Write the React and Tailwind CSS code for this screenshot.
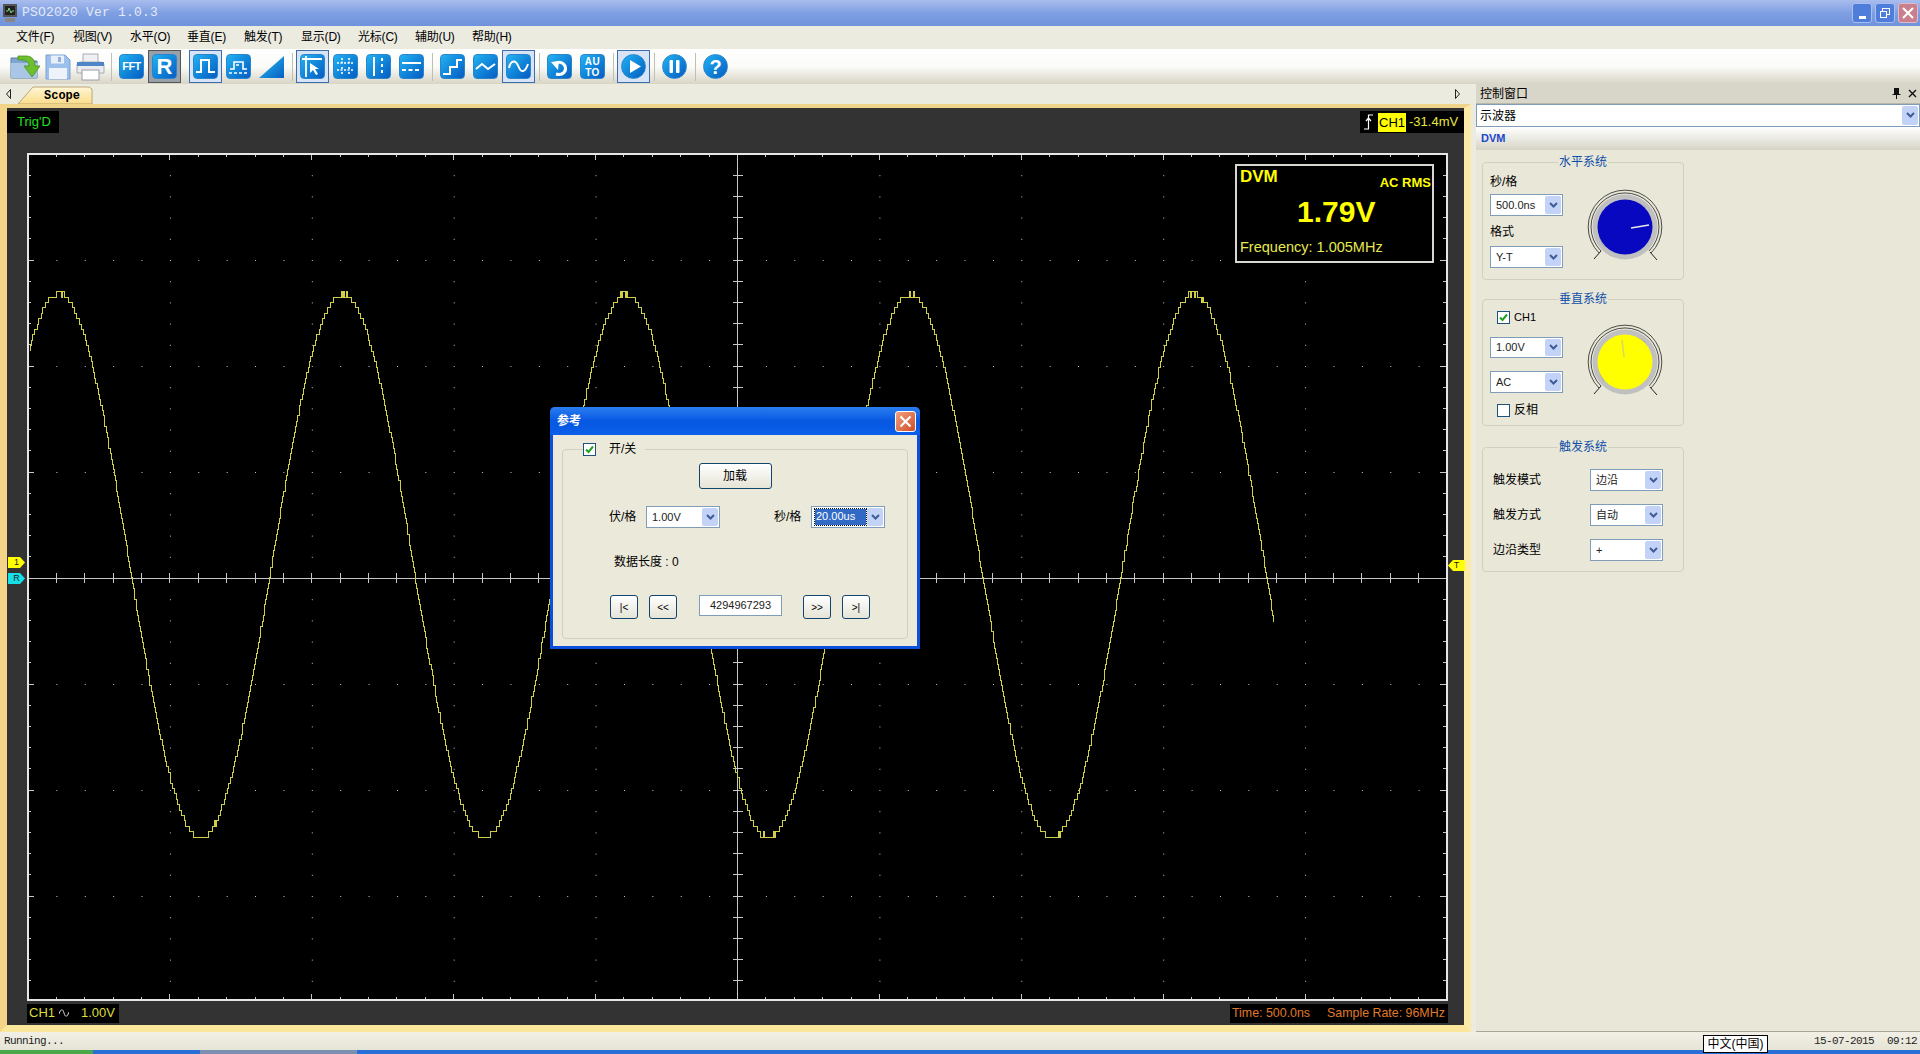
import React from "react";

const MENUS = ["文件(F)", "视图(V)", "水平(O)", "垂直(E)", "触发(T)", "显示(D)", "光标(C)", "辅助(U)", "帮助(H)"];

const X0 = 28;
const Y0 = 154;
const DX = 141.9;
const DY = 106;
const CX = X0 + DX * 5;
const CY = Y0 + DY * 4;

function wavePath() {
  const q = 5.4;
  let d = "";
  let last = null;
  for (let x = 30; x <= 1274; x += 1) {
    const y = 565.5 - 271.5 * Math.cos((2 * Math.PI * (x - 59)) / 283.75);
    const r = Math.sin(x * 12.9898) * 43758.5453;
    const noise = (r - Math.floor(r) - 0.5) * q * 0.7;
    const level = Math.round((y + noise) / q) * q;
    if (last === null) d += `M${x} ${level}`;
    else d += `V${level}H${x}`;
    last = level;
  }
  return d;
}

function Grid() {
  const lines = [];
  for (let i = 0; i <= 50; i++) {
    const x = X0 + (DX * i) / 5;
    const major = i % 5 === 0;
    const len = major ? 6 : 3;
    lines.push(`M${x} ${Y0}v${len}M${x} 1000v-${len}`);
    lines.push(`M${x} ${CY - 5}v10`);
  }
  for (let j = 0; j <= 40; j++) {
    const y = Y0 + (DY * j) / 5;
    const major = j % 5 === 0;
    const len = major ? 6 : 3;
    lines.push(`M${X0} ${y}h${len}M1446 ${y}h-${len}`);
    lines.push(`M${CX - 5} ${y}h10`);
  }
  const dots = [];
  for (let r = 1; r < 8; r++) {
    if (r === 4) continue;
    for (let i = 1; i < 50; i++) {
      dots.push(<rect key={`h${r}-${i}`} x={X0 + (DX * i) / 5} y={Y0 + DY * r} width="1" height="1" fill="#c8c8c8" />);
    }
  }
  for (let c = 1; c < 10; c++) {
    if (c === 5) continue;
    for (let j = 1; j < 40; j++) {
      if (j % 5 === 0) continue;
      dots.push(<rect key={`v${c}-${j}`} x={X0 + DX * c} y={Y0 + (DY * j) / 5} width="1" height="1" fill="#c8c8c8" />);
    }
  }
  return (
    <svg width="1417" height="844" viewBox="29 155 1417 844" className="block">
      {dots}
      <path d={lines.join("")} stroke="#c8c8c8" strokeWidth="1" fill="none" shapeRendering="crispEdges" />
      <path d={`M${X0} ${CY}H1446M${CX} ${Y0}V1000`} stroke="#c8c8c8" strokeWidth="1" shapeRendering="crispEdges" />
      <path d={wavePath()} stroke="#d0d048" strokeWidth="1" fill="none" shapeRendering="crispEdges" />
    </svg>
  );
}

function Tile({ round, children }) {
  return (
    <div
      className={`w-[25px] h-[25px] flex items-center justify-center bg-gradient-to-br from-[#25b2f2] to-[#0a5cc2] border border-[#2a86cc] ${
        round ? "rounded-full" : "rounded-[4px]"
      }`}
    >
      {children}
    </div>
  );
}

function Glyph({ children }) {
  return (
    <svg width="23" height="23" viewBox="0 0 23 23" fill="none" stroke="#fff" strokeWidth="2">
      {children}
    </svg>
  );
}

function Slot({ active, gray, children }) {
  let cls = "";
  if (active) cls = "border border-[#3b6eaa] bg-[#d8e4f6]";
  if (gray) cls = "border border-[#555] bg-[#9aa0aa]";
  return <div className={`w-[33px] h-[33px] flex items-center justify-center ${cls}`}>{children}</div>;
}

function Sep({ hidden }) {
  return (
    <div className="w-[8px] h-[28px] flex justify-center">
      {!hidden && <div className="w-px h-full bg-[#c0bfb4]" />}
    </div>
  );
}

function Toolbar() {
  return (
    <div className="h-[35px] flex items-center px-[8px] bg-gradient-to-b from-white via-[#fbfbf8] to-[#d8d5c6]">
      <Slot>
        <svg width="32" height="30" viewBox="0 0 32 30">
          <path d="M2 6h10l2 3h14v17H2z" fill="#7fa6d0" stroke="#5a7da6" />
          <path d="M2 11h26v15H2z" fill="#a9c6e6" />
          <path d="M9 4h8c6 0 9 4 9 10h5l-8 11-8-11h5c0-4-3-6-6-6H9z" fill="#6cc02e" stroke="#4b8f1c" strokeWidth="0.8" />
        </svg>
      </Slot>
      <Slot>
        <svg width="26" height="26" viewBox="0 0 26 26">
          <path d="M1 1h19l5 5v19H1z" fill="#9cc0ec" stroke="#7ba0d2" />
          <rect x="6" y="1.5" width="13" height="8" fill="#e8eff9" />
          <rect x="13" y="3" width="3" height="5" fill="#8fb0dc" />
          <rect x="4" y="14" width="18" height="11" fill="#eef3fb" />
        </svg>
      </Slot>
      <Slot>
        <svg width="31" height="28" viewBox="0 0 31 28">
          <rect x="8" y="1" width="15" height="9" fill="#eef0f3" stroke="#a8acb4" />
          <path d="M2 12c0-2 2-3 4-3h19c2 0 4 1 4 3v8H2z" fill="#e9ebee" stroke="#a8acb4" />
          <rect x="2" y="9" width="27" height="4" fill="#4c86c6" />
          <rect x="7" y="17" width="17" height="10" fill="#fff" stroke="#9a9ea6" />
        </svg>
      </Slot>
      <Sep />
      <Slot>
        <Tile>
          <span className="text-white font-bold text-[11px] tracking-[-0.5px]">FFT</span>
        </Tile>
      </Slot>
      <Slot gray>
        <Tile>
          <span className="text-white font-bold text-[22px] leading-none">R</span>
        </Tile>
      </Slot>
      <Sep hidden />
      <Slot active>
        <Tile>
          <Glyph>
            <path d="M2 17h5V5h8v12h6" />
          </Glyph>
        </Tile>
      </Slot>
      <Slot>
        <Tile>
          <Glyph>
            <path d="M3 14h4V7h9v7h4" strokeWidth="1.6" />
            <path d="M2 18h19M9 10h5" strokeWidth="1.6" strokeDasharray="3 2" />
          </Glyph>
        </Tile>
      </Slot>
      <Slot>
        <svg width="25" height="25" viewBox="0 0 25 25">
          <defs>
            <linearGradient id="tri" x1="0" y1="0" x2="1" y2="1">
              <stop offset="0" stopColor="#25c4f4" />
              <stop offset="1" stopColor="#0a5cc2" />
            </linearGradient>
          </defs>
          <path d="M0 24L25 2v22z" fill="url(#tri)" />
        </svg>
      </Slot>
      <Sep />
      <Slot active>
        <Tile>
          <Glyph>
            <path d="M1 4h20M5 1v21" strokeWidth="1.8" />
            <path d="M9 8v10l3-3 3 5 2-1-3-5h4z" fill="#fff" stroke="none" />
          </Glyph>
        </Tile>
      </Slot>
      <Slot>
        <Tile>
          <Glyph>
            <path d="M8 3v6M8 12v2M8 17v3M15 3v6M15 12v2M15 17v3M3 8h17M3 15h17" strokeWidth="1.6" strokeDasharray="2 1.5" />
          </Glyph>
        </Tile>
      </Slot>
      <Slot>
        <Tile>
          <Glyph>
            <path d="M7 2v19" strokeWidth="2" />
            <path d="M15 3v17" strokeWidth="2" strokeDasharray="3 3" />
          </Glyph>
        </Tile>
      </Slot>
      <Slot>
        <Tile>
          <Glyph>
            <path d="M2 8h19" strokeWidth="2" />
            <path d="M2 15h19" strokeWidth="2" strokeDasharray="4 2.5" />
          </Glyph>
        </Tile>
      </Slot>
      <Sep />
      <Slot>
        <Tile>
          <Glyph>
            <path d="M2 19h7v-7h7V5h5" />
          </Glyph>
        </Tile>
      </Slot>
      <Slot>
        <Tile>
          <Glyph>
            <path d="M2 14l6-5 6 5 7-5" />
          </Glyph>
        </Tile>
      </Slot>
      <Slot active>
        <Tile>
          <Glyph>
            <path d="M2 13C4 4 9 5 11.5 11.5S18 18 21 9" />
          </Glyph>
        </Tile>
      </Slot>
      <Sep />
      <Slot>
        <Tile>
          <Glyph>
            <path d="M8 19c7 2 11-3 9-8-2-4-7-5-10-2" strokeWidth="3" />
            <path d="M3 7l7 8 1-9z" fill="#fff" stroke="none" />
          </Glyph>
        </Tile>
      </Slot>
      <Slot>
        <Tile>
          <span className="text-white font-bold text-[10px] leading-[11px] text-center tracking-[0.5px]">
            AU
            <br />
            TO
          </span>
        </Tile>
      </Slot>
      <Sep />
      <Slot active>
        <Tile round>
          <svg width="23" height="23" viewBox="0 0 23 23">
            <path d="M8 5l11 6.5L8 18z" fill="#fff" />
          </svg>
        </Tile>
      </Slot>
      <Sep />
      <Slot>
        <Tile round>
          <svg width="23" height="23" viewBox="0 0 23 23">
            <rect x="6.5" y="5" width="3.5" height="13" rx="1" fill="#fff" />
            <rect x="13" y="5" width="3.5" height="13" rx="1" fill="#fff" />
          </svg>
        </Tile>
      </Slot>
      <Sep />
      <Slot>
        <Tile round>
          <span className="text-white font-bold text-[20px] leading-none">?</span>
        </Tile>
      </Slot>
    </div>
  );
}

function TitleBar() {
  return (
    <div className="h-[26px] flex items-center bg-gradient-to-b from-[#a9bdee] via-[#7f9fe2] to-[#6f92dc] pl-[3px] pr-[2px]">
      <svg width="15" height="18" viewBox="0 0 15 18">
        <rect x="0" y="0" width="14" height="13" fill="#555" />
        <rect x="2" y="2" width="10" height="9" fill="#222" />
        <path d="M3 7h2l1-3 2 5 1-2h2" stroke="#7fd07f" fill="none" />
        <rect x="2" y="14" width="10" height="4" fill="#888" />
      </svg>
      <span className="ml-[4px] text-[13px] tracking-[0.2px] text-[#e4e9f8] font-['Liberation_Mono',monospace]">PSO2020 Ver 1.0.3</span>
      <div className="ml-auto flex gap-[3px] items-center">
        <div className="w-[20px] h-[20px] rounded-[3px] bg-[#4f7ddb] border border-[#a8c0f0] flex items-end justify-center pb-[3px]">
          <div className="w-[7px] h-[3px] bg-white" />
        </div>
        <div className="w-[20px] h-[20px] rounded-[3px] bg-[#4f7ddb] border border-[#a8c0f0] flex items-center justify-center">
          <svg width="12" height="12" viewBox="0 0 12 12" fill="none" stroke="#fff">
            <rect x="3.5" y="1.5" width="7" height="6" />
            <rect x="1.5" y="4.5" width="6" height="6" fill="#4f7ddb" />
          </svg>
        </div>
        <div className="w-[20px] h-[20px] rounded-[3px] bg-[#c8808f] border border-[#e4b8c4] flex items-center justify-center">
          <svg width="12" height="12" viewBox="0 0 12 12" stroke="#fff" strokeWidth="2">
            <path d="M1 1l10 10M11 1L1 11" />
          </svg>
        </div>
      </div>
    </div>
  );
}

function MenuBar() {
  return (
    <div className="h-[23px] flex items-center pl-[16px] pb-[1px] bg-[#ecebe0] text-[12px] text-black">
      {MENUS.map((m) => (
        <div key={m} className="w-[57px] tracking-[-0.2px]">
          {m}
        </div>
      ))}
    </div>
  );
}

function Select({ value, width = "w-[73px]", height = "h-[22px]", selected }) {
  return (
    <div className={`${width} ${height} flex items-center bg-white border border-[#7f9db9] p-[1px]`}>
      <div className="flex-1 min-w-0 flex items-center h-full pl-[2px]">
        {selected ? (
          <span className="bg-[#316ac5] text-white text-[11px] w-[51px] h-[16px] leading-[15px] pl-[1px] outline-1 outline-dotted outline-[#111]">
            {value}
          </span>
        ) : (
          <span className="text-[11px] text-[#222] pl-[2px] whitespace-nowrap">{value}</span>
        )}
      </div>
      <ArrowButton />
    </div>
  );
}

function ArrowButton() {
  return (
    <div className="w-[16px] h-full shrink-0 rounded-[2px] bg-[#c3d3f8] flex items-center justify-center">
      <svg width="9" height="7" viewBox="0 0 9 7" fill="none" stroke="#3f5d94" strokeWidth="2">
        <path d="M1 1l3.5 3.5L8 1" />
      </svg>
    </div>
  );
}

function Check({ checked }) {
  return (
    <div className="w-[13px] h-[13px] shrink-0 bg-white border border-[#1c5180] flex items-center justify-center">
      {checked && (
        <svg width="9" height="9" viewBox="0 0 9 9" fill="none" stroke="#21a121" strokeWidth="2">
          <path d="M1 4.5l2.5 2.5L8 1.5" />
        </svg>
      )}
    </div>
  );
}

function Knob({ color, pointer }) {
  return (
    <svg width="84" height="84" viewBox="-42 -42 84 84">
      <path d="M-26 26A36.8 36.8 0 1 1 26 26" fill="none" stroke="#222" strokeWidth="0.8" />
      <path d="M-24 24A34 34 0 1 1 24 24" fill="none" stroke="#222" strokeWidth="0.8" />
      <circle r="32.5" fill="#c0c0c0" />
      <path d="M-21 19.5A29 29 0 0 1 21 -19.5" fill="none" stroke="#aaa" strokeWidth="1" />
      <circle r="27.5" fill={color} />
      <path d="M-24 24l-7 8M25 25l7 8" stroke="#222" strokeWidth="1" />
      {pointer}
    </svg>
  );
}

function Group({ title, className, children }) {
  return (
    <fieldset className={`w-[202px] ml-[6px] border border-[#d0cfc0] rounded-[4px] text-[12px] ${className}`}>
      <legend className="mx-auto px-[1px] h-[16px] leading-[16px] text-[12px] text-[#0f4fa8]">{title}</legend>
      {children}
    </fieldset>
  );
}

function ControlPanel() {
  return (
    <div className="w-[444px] flex flex-col bg-[#e9e7d8] border-b border-[#a8a79c]">
      <div className="h-[20px] flex items-center bg-[#d8d6c8] pl-[4px] pr-[3px] text-[12px] text-black border-b border-[#b8b7aa]">
        <span>控制窗口</span>
        <svg className="ml-auto" width="9" height="11" viewBox="0 0 9 11" fill="#111">
          <path d="M2 0h5v6h1.5v1H5v4H4V7H.5V6H2z" />
        </svg>
        <svg className="ml-[7px]" width="9" height="9" viewBox="0 0 9 9" stroke="#111" strokeWidth="1.4">
          <path d="M1 1l7 7M8 1L1 8" />
        </svg>
      </div>
      <div className="h-[23px] flex items-center bg-white border border-[#7f9db9] p-[1px] pl-[3px] text-[12px] text-black">
        <span className="flex-1">示波器</span>
        <ArrowButton />
      </div>
      <div className="h-[23px] flex items-center pl-[5px] bg-gradient-to-b from-white to-[#d6d4c6] text-[11px] font-bold text-[#1a46c8]">
        DVM
      </div>

      <Group title="水平系统" className="mt-[4px] h-[126px]">
        <div className="flex pl-[7px]">
          <div className="w-[73px] pt-[4px]">
            <div className="h-[16px] leading-[16px]">秒/格</div>
            <div className="mt-[4px]">
              <Select value="500.0ns" />
            </div>
            <div className="mt-[8px] h-[16px] leading-[16px]">格式</div>
            <div className="mt-[6px]">
              <Select value="Y-T" />
            </div>
          </div>
          <div className="ml-[20px] mt-[15px]">
            <Knob color="#0808c0" pointer={<path d="M6 1L24 -2" stroke="#e8e8e8" strokeWidth="1.6" />} />
          </div>
        </div>
      </Group>

      <Group title="垂直系统" className="mt-[11px] h-[135px]">
        <div className="flex pl-[7px]">
          <div className="w-[73px] pt-[2px]">
            <div className="h-[16px] flex items-center gap-[4px] ml-[7px]">
              <Check checked />
              <span className="text-[11px]">CH1</span>
            </div>
            <div className="mt-[12px]">
              <Select value="1.00V" height="h-[21px]" />
            </div>
            <div className="mt-[13px]">
              <Select value="AC" />
            </div>
            <div className="mt-[9px] h-[16px] flex items-center gap-[4px] ml-[7px]">
              <Check />
              <span>反相</span>
            </div>
          </div>
          <div className="ml-[20px] mt-[13px]">
            <Knob color="#ffff00" pointer={<path d="M-1 -5L-3 -22" stroke="#d8d860" strokeWidth="1.6" />} />
          </div>
        </div>
      </Group>

      <Group title="触发系统" className="mt-[13px] h-[133px]">
        <div className="flex flex-col pl-[10px] pt-[14px] gap-[13px]">
          {[
            ["触发模式", "边沿"],
            ["触发方式", "自动"],
            ["边沿类型", "+"],
          ].map(([label, value]) => (
            <div key={label} className="flex items-center">
              <div className="w-[97px]">{label}</div>
              <Select value={value} />
            </div>
          ))}
        </div>
      </Group>
    </div>
  );
}

function ScopeTab() {
  return (
    <div className="h-[20px] flex items-end pl-[6px] bg-[#ecebe0] relative">
      <svg className="mb-[5px]" width="5" height="10" viewBox="0 0 5 10" fill="none" stroke="#222">
        <path d="M4.5 .5L.5 5l4 4.5z" />
      </svg>
      <div className="relative w-[76px] h-[18px] ml-[7px]">
        <svg className="absolute inset-0" width="76" height="18" viewBox="0 0 76 18">
          <defs>
            <linearGradient id="tabfill" x1="0" y1="0" x2="0" y2="1">
              <stop offset="0" stopColor="#fff6d4" />
              <stop offset="1" stopColor="#fbdc8a" />
            </linearGradient>
          </defs>
          <path d="M0 18L15 1h56l3 2v15z" fill="url(#tabfill)" stroke="#b8a878" />
        </svg>
        <span className="absolute left-[26px] top-[1px] text-[12px] font-bold text-black font-['Liberation_Mono',monospace]">Scope</span>
      </div>
      <svg className="ml-auto mr-[16px] mb-[5px]" width="5" height="10" viewBox="0 0 5 10" fill="none" stroke="#222">
        <path d="M.5 .5L4.5 5l-4 4.5z" />
      </svg>
    </div>
  );
}

function Marker({ className, flip, children }) {
  return (
    <div
      className={`absolute w-[17px] h-[11px] flex items-center justify-center text-[9px] leading-none text-[#222] ${className} ${
        flip ? "[clip-path:polygon(5px_0,100%_0,100%_100%,5px_100%,0_50%)]" : "[clip-path:polygon(0_0,12px_0,100%_50%,12px_100%,0_100%)]"
      }`}
    >
      {children}
    </div>
  );
}

function ScopeArea() {
  return (
    <div className="w-[1476px] flex flex-col">
      <ScopeTab />
      <div className="relative h-[928px] border-t-[4px] border-x-[7px] border-b-[7px] border-t-[#f0d48a] border-l-[#f3d488] border-r-[#fbeaa8] border-b-[#fbe79c] bg-[#333] mr-[5px]">
        <div className="h-[45px] flex items-start justify-between pt-[3px]">
          <div className="w-[52px] h-[22px] bg-black text-[#22e022] text-[13px] leading-[22px] pl-[10px]">Trig'D</div>
          <div className="w-[104px] h-[22px] bg-black flex items-center text-[13px] text-[#e8e840]">
            <svg className="ml-[4px]" width="9" height="16" viewBox="0 0 9 16" fill="none" stroke="#fff" strokeWidth="1.2">
              <path d="M0 15h4.5V1H9M2 7l2.5-3L7 7" />
            </svg>
            <span className="ml-[5px] bg-[#ffff00] text-black px-[1px] leading-[19px] whitespace-nowrap">CH1</span>
            <span className="ml-[3px] whitespace-nowrap">-31.4mV</span>
          </div>
        </div>
        <div className="relative ml-[20px] w-[1421px] h-[848px] border-2 border-[#e6e6e6] bg-black">
          <Grid />
          <div className="absolute left-[1206px] top-[9px] w-[199px] h-[99px] border-2 border-[#d8d8d0] bg-black text-[#ffff00]">
            <div className="absolute left-[3px] top-[-2px] text-[17px] font-bold">DVM</div>
            <div className="absolute right-[1px] top-[7px] text-[13px] font-bold">AC RMS</div>
            <div className="absolute left-[60px] top-[23px] text-[30px] font-bold">1.79V</div>
            <div className="absolute left-[3px] top-[71px] text-[14.5px] text-[#e8e850] whitespace-nowrap">Frequency: 1.005MHz</div>
          </div>
        </div>
        <div className="h-[24px] ml-[20px] w-[1421px] flex items-center justify-between text-[12px]">
          <div className="w-[92px] h-[19px] bg-black text-[#dede3c] flex items-center">
            <span className="ml-[2px] text-[13px]">CH1</span>
            <svg className="ml-[4px]" width="10" height="8" viewBox="0 0 10 8" fill="none" stroke="#ddd">
              <path d="M0 5C2 -1 4 0 5 4s3 5 5 -1" />
            </svg>
            <span className="ml-[12px] text-[13px]">1.00V</span>
          </div>
          <div className="w-[218px] h-[19px] bg-black text-[#e07a28] flex items-center text-[12.4px]">
            <span className="ml-[2px] whitespace-nowrap">Time: 500.0ns</span>
            <span className="ml-[17px] whitespace-nowrap">Sample Rate: 96MHz</span>
          </div>
        </div>
        <Marker className="left-[1px] top-[449px] bg-[#ffff00]">1</Marker>
        <Marker className="left-[1px] top-[465px] bg-[#15e0e8]">R</Marker>
        <Marker flip className="left-[1441px] top-[452px] bg-[#ffff00]">T</Marker>
      </div>
    </div>
  );
}

function DialogButton({ children, className }) {
  return (
    <div className={`flex items-center justify-center rounded-[3px] border border-[#12456e] bg-gradient-to-b from-white to-[#e6e4d6] text-black ${className}`}>
      {children}
    </div>
  );
}

function RefDialog() {
  return (
    <div className="absolute left-[550px] top-[407px] w-[370px] h-[242px] flex flex-col rounded-t-[5px] bg-[#0a50dc] text-[12px] text-black">
      <div className="h-[28px] shrink-0 flex items-center pl-[7px] pr-[4px] rounded-t-[5px] bg-gradient-to-b from-[#2a7cf0] via-[#0758e2] to-[#0a5fe8]">
        <span className="text-white text-[12px] font-bold">参考</span>
        <div className="ml-auto w-[21px] h-[21px] rounded-[3px] border border-white bg-gradient-to-br from-[#f0a080] to-[#d04a24] flex items-center justify-center">
          <svg width="13" height="13" viewBox="0 0 13 13" stroke="#fff" strokeWidth="2.2">
            <path d="M1.5 1.5l10 10M11.5 1.5l-10 10" />
          </svg>
        </div>
      </div>
      <div className="flex-1 mx-[3px] mb-[3px] bg-[#ebe9da] px-[9px] pt-[6px]">
        <fieldset className="border border-[#d0cfc0] rounded-[4px] pb-[19px]">
          <legend className="ml-[20px] h-[16px] flex items-center pr-[9px]">
            <Check checked />
            <span className="ml-[13px]">开/关</span>
          </legend>
          <div className="flex justify-center mt-[6px]">
            <DialogButton className="w-[73px] h-[26px]">加载</DialogButton>
          </div>
          <div className="flex items-center mt-[17px] pl-[46px]">
            <div className="w-[37px]">伏/格</div>
            <Select value="1.00V" width="w-[74px]" />
            <div className="ml-[54px] w-[37px]">秒/格</div>
            <Select value="20.00us" width="w-[74px]" selected />
          </div>
          <div className="mt-[26px] pl-[51px] h-[16px] leading-[16px]">数据长度 : 0</div>
          <div className="flex items-start mt-[25px] pl-[47px] text-[10px]">
            <DialogButton className="w-[28px] h-[24px]">|&lt;</DialogButton>
            <DialogButton className="w-[28px] h-[24px] ml-[11px]">&lt;&lt;</DialogButton>
            <div className="w-[83px] h-[21px] ml-[22px] bg-white border border-[#7f9db9] flex items-center justify-center text-[11px] text-[#222]">4294967293</div>
            <DialogButton className="w-[28px] h-[24px] ml-[21px]">&gt;&gt;</DialogButton>
            <DialogButton className="w-[28px] h-[24px] ml-[11px]">&gt;|</DialogButton>
          </div>
        </fieldset>
      </div>
    </div>
  );
}

export default function App() {
  return (
    <div className="relative w-[1920px] h-[1054px] overflow-hidden flex flex-col bg-[#ecebe0] font-['Liberation_Sans','Noto_Sans_CJK_SC',sans-serif]">
      <TitleBar />
      <MenuBar />
      <Toolbar />
      <div className="h-[948px] flex">
        <ScopeArea />
        <ControlPanel />
      </div>
      <div className="h-[18px] flex items-center px-[4px] bg-gradient-to-b from-[#f2f0e6] to-[#e6e4d6] text-[11px] tracking-[-0.6px] text-[#222] font-['Liberation_Mono',monospace]">
        <span>Running...</span>
        <span className="ml-auto">15-07-2015</span>
        <span className="ml-[13px] mr-[-1px]">09:12</span>
      </div>
      <div className="h-[4px] flex bg-[#2a6fd8]">
        <div className="w-[93px] bg-[#4aa84a]" />
        <div className="w-[107px]" />
        <div className="w-[157px] bg-[#7d8fb0]" />
      </div>
      <RefDialog />
      <div className="absolute left-[1703px] top-[1035px] w-[65px] h-[18px] bg-white border border-black text-[12px] leading-[16px] text-center text-black">
        中文(中国)
      </div>
    </div>
  );
}
